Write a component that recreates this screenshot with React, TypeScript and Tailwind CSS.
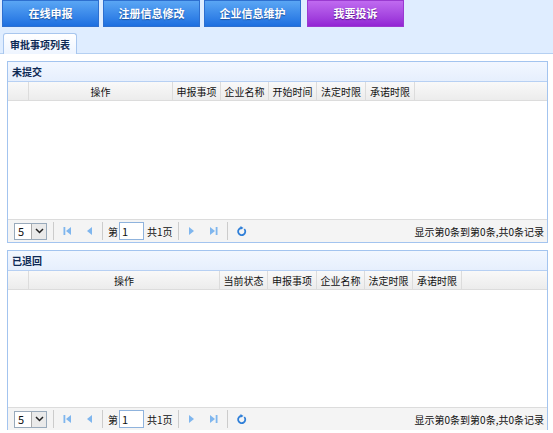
import React from 'react';

const font = { fontFamily: '"Noto Sans CJK SC", "Microsoft YaHei", sans-serif' };

type Col = { label: string; w: number };

const Pager: React.FC = () => (
    <div className="flex h-[23px] items-center whitespace-nowrap border-t border-[#dcdcdc] bg-[#f4f4f4] pl-[6px] pr-[3px] text-[10px] text-[#111]">
        <div className="flex h-[17px] w-[33px] items-center justify-between border border-[#9ab] bg-white pl-[3px]">
            <span className="text-[11px] leading-none">5</span>
            <span className="flex h-[15px] w-[15px] items-center justify-center border-l border-[#aaa] bg-[#eaeaea]">
                <svg width="9" height="6" viewBox="0 0 9 6"><path d="M1 1 L4.5 4.5 L8 1" stroke="#222" strokeWidth="1.5" fill="none" /></svg>
            </span>
        </div>
        <span className="ml-[6px] h-[18px] w-px bg-[#ccc]" />
        <svg className="ml-[9px]" width="9" height="10" viewBox="0 0 9 10"><rect x="0.5" y="1" width="1.8" height="8" fill="#7fb6ee" /><path d="M8 1 L3 5 L8 9 Z" fill="#7fb6ee" /></svg>
        <svg className="ml-[14px]" width="7" height="10" viewBox="0 0 7 10"><path d="M6 1 L1 5 L6 9 Z" fill="#7fb6ee" /></svg>
        <span className="ml-[9px] h-[18px] w-px bg-[#ccc]" />
        <span className="ml-[5px]">第</span>
        <div className="ml-px flex h-[18px] w-[25px] items-center border border-[#8fb3dd] bg-white pl-[2px] text-[11px]">1</div>
        <span className="ml-[3px]">共1页</span>
        <span className="ml-[5px] h-[18px] w-px bg-[#ccc]" />
        <svg className="ml-[9px]" width="7" height="10" viewBox="0 0 7 10"><path d="M1 1 L6 5 L1 9 Z" fill="#7fb6ee" /></svg>
        <svg className="ml-[14px]" width="9" height="10" viewBox="0 0 9 10"><path d="M1 1 L6 5 L1 9 Z" fill="#7fb6ee" /><rect x="6.7" y="1" width="1.8" height="8" fill="#7fb6ee" /></svg>
        <span className="ml-[9px] h-[18px] w-px bg-[#ccc]" />
        <svg className="ml-[8px]" width="11" height="11" viewBox="0 0 11 11"><path d="M8.3 3 A3.6 3.6 0 1 1 5.5 1.9" stroke="#2f7fd8" strokeWidth="1.8" fill="none" /><path d="M4.5 0 L7.5 1.9 L4.5 3.8 Z" fill="#2f7fd8" /></svg>
        <span className="ml-auto">显示第0条到第0条,共0条记录</span>
    </div>
);

const Grid: React.FC<{ title: string; cols: Col[]; bodyH: number; last?: boolean }> = ({ title, cols, bodyH, last }) => (
    <div className={`mx-[7px] w-[541px] border border-[#a3c4ef] ${last ? 'border-b-0' : ''}`}>
        <div className="flex h-[20px] items-center border-b border-[#b7d0f3] bg-gradient-to-b from-[#f2f7ff] to-[#e6effd] pl-[4px] text-[10px] font-bold text-[#0e2a55]">{title}</div>
        <div className="flex h-[19px] whitespace-nowrap border-b border-[#dcdcdc] bg-gradient-to-b from-[#f9f9f9] to-[#ececec] text-[10px] text-[#111]">
            <div className="w-[21px] border-r border-[#dcdcdc]" />
            {cols.map(c => (
                <div key={c.label} className="flex items-center justify-center border-r border-[#dcdcdc]" style={{ width: c.w }}>{c.label}</div>
            ))}
        </div>
        <div className="bg-white" style={{ height: bodyH }} />
        <Pager />
    </div>
);

export default function App() {
    return (
        <div className="h-[433px] w-[553px] overflow-hidden bg-white" style={font}>
            <div className="h-[54px] border-b border-[#b5d0f2] bg-[#dfedff]">
                <div className="flex gap-[4px] pl-[2px]">
                    {['在线申报', '注册信息修改', '企业信息维护'].map(t => (
                        <div key={t} className="flex h-[27px] w-[97px] items-center justify-center border border-[#2d6fcf] bg-gradient-to-b from-[#5aa6f4] to-[#1d6fe0] text-[11px] font-bold text-white [text-shadow:0_1px_1px_#1a4f9c]">{t}</div>
                    ))}
                    <div className="ml-[2px] flex h-[27px] w-[97px] items-center justify-center border border-[#9a3ad0] bg-gradient-to-b from-[#c06af0] to-[#9324d4] text-[11px] font-bold text-white [text-shadow:0_1px_1px_#5a1490]">我要投诉</div>
                </div>
                <div className="mt-[6px] flex pl-[3px]">
                    <div className="relative z-10 flex h-[21px] w-[74px] items-center justify-center rounded-t-[3px] border border-b-0 border-[#a8c6ee] bg-gradient-to-b from-[#ffffff] to-[#eef5ff] text-[10px] font-bold text-[#0e2a55]">审批事项列表</div>
                </div>
            </div>
            <div className="pt-[7px]">
                <Grid
                    title="未提交"
                    bodyH={118}
                    cols={[
                        { label: '操作', w: 144 },
                        { label: '申报事项', w: 48 },
                        { label: '企业名称', w: 48 },
                        { label: '开始时间', w: 48 },
                        { label: '法定时限', w: 49 },
                        { label: '承诺时限', w: 49 },
                    ]}
                />
                <div className="h-[7px]" />
                <Grid
                    title="已退回"
                    last
                    bodyH={117}
                    cols={[
                        { label: '操作', w: 191 },
                        { label: '当前状态', w: 48 },
                        { label: '申报事项', w: 49 },
                        { label: '企业名称', w: 48 },
                        { label: '法定时限', w: 48 },
                        { label: '承诺时限', w: 49 },
                    ]}
                />
            </div>
        </div>
    );
}
